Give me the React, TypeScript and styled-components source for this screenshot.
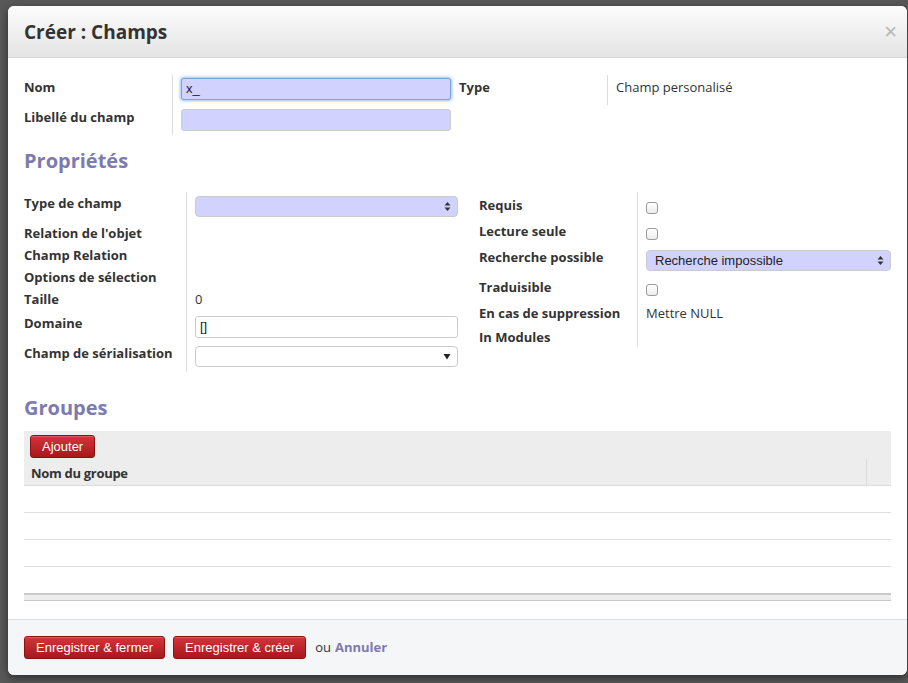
import React from 'react'
import styled, { createGlobalStyle } from 'styled-components'

const GlobalStyle = createGlobalStyle`
  html, body {
    margin: 0;
    padding: 0;
    background: #585858;
    overflow: hidden;
  }
`

const Page = styled.div`
  height: 683px;
  padding: 6px 0 0 8px;
  box-sizing: border-box;
  background: #585858;
  font-family: 'Open Sans', 'DejaVu Sans', sans-serif;
  color: #333;
`

const Modal = styled.div`
  width: 899px;
  height: 669px;
  background: #fff;
  border-radius: 6px;
  box-shadow: 0 3px 8px rgba(0, 0, 0, 0.5);
  display: flex;
  flex-direction: column;
  overflow: hidden;
`

const Header = styled.div`
  height: 52px;
  box-sizing: border-box;
  display: flex;
  align-items: center;
  justify-content: space-between;
  padding: 0 10px 0 16px;
  background: linear-gradient(#fcfcfc, #e4e4e4);
  border-bottom: 1px solid #d6d6d6;
`

const Title = styled.h3`
  margin: 0;
  font-size: 19px;
  font-weight: 700;
  letter-spacing: 0;
  color: #333;
`

const Close = styled.span`
  font-family: 'Liberation Sans', sans-serif;
  font-size: 22px;
  color: #b5b5b5;
  line-height: 1;
`

const Body = styled.div`
  flex: 1;
  padding: 17px 16px 0;
`

const Section = styled.div<{ $gap?: number }>`
  display: flex;
  gap: ${(p) => p.$gap ?? 0}px;
`

const Group = styled.div<{ $w: number }>`
  width: ${(p) => p.$w}px;
  flex-shrink: 0;
`

const Row = styled.div<{ $h: number; $lw: number }>`
  display: grid;
  grid-template-columns: ${(p) => p.$lw}px 1fr;
  height: ${(p) => p.$h}px;
`

const Label = styled.div<{ $pt: number }>`
  padding-top: ${(p) => p.$pt}px;
  font-size: 13px;
  line-height: 16px;
  font-weight: 700;
  color: #333;
  white-space: nowrap;
`

const Field = styled.div<{ $pt: number }>`
  border-left: 1px solid #dcdcdc;
  padding: ${(p) => p.$pt}px 0 0 8px;
  font-size: 13px;
  line-height: 16px;
  color: #333;
`

const Input = styled.div<{ $bg?: string; $focus?: boolean; $w?: number }>`
  width: ${(p) => (p.$w ? `${p.$w}px` : '100%')};
  height: 22px;
  box-sizing: border-box;
  border-radius: 3px;
  border: 1px solid ${(p) => (p.$focus ? '#79a6dc' : '#cbcbcb')};
  box-shadow: ${(p) => (p.$focus ? '0 0 3px 1px rgba(82, 148, 225, 0.6)' : 'none')};
  background: ${(p) => p.$bg ?? '#fff'};
  font-family: 'Liberation Sans', sans-serif;
  font-size: 13px;
  line-height: 20px;
  padding: 0 4px;
  color: #222;
`

const Select = styled.div<{ $bg?: string }>`
  height: 21px;
  box-sizing: border-box;
  border-radius: 4px;
  border: 1px solid #cbcbcb;
  background: ${(p) => p.$bg ?? '#fff'};
  display: flex;
  align-items: center;
  justify-content: space-between;
  padding: 0 6px 0 8px;
  font-family: 'Liberation Sans', sans-serif;
  font-size: 13px;
  color: #222;
`

const Check = styled.span`
  display: block;
  width: 12px;
  height: 12px;
  box-sizing: border-box;
  border: 1px solid #9a9a9a;
  border-radius: 3px;
  background: linear-gradient(#fff, #ececec);
`

const Heading = styled.h2<{ $mt: number; $mb: number }>`
  margin: ${(p) => p.$mt}px 0 ${(p) => p.$mb}px;
  font-size: 20px;
  line-height: 24px;
  font-weight: 700;
  color: #7c7bad;
`

const Table = styled.div`
  width: 867px;
`

const TableHead = styled.div`
  background: #ededed;
  border-bottom: 1px solid #dcdcdc;
  padding-top: 3px;
`

const Button = styled.button`
  height: 23px;
  padding: 0 11px;
  border: 1px solid #8b1010;
  border-radius: 3px;
  background: linear-gradient(#d3353a, #a8181c);
  color: #fff;
  font-family: 'Liberation Sans', sans-serif;
  font-size: 13px;
  box-shadow: inset 0 1px 0 rgba(255, 255, 255, 0.2);
  cursor: pointer;
`

const Toolbar = styled.div`
  padding: 0 6px;
  height: 25px;
`

const HeadRow = styled.div`
  display: grid;
  grid-template-columns: 1fr 25px;
  height: 26px;
`

const HeadCell = styled.div<{ $sep?: boolean }>`
  border-left: ${(p) => (p.$sep ? '1px solid #dcdcdc' : 'none')};
  padding: 5px 7px 0;
  font-size: 13px;
  font-weight: 700;
  letter-spacing: -0.3px;
  color: #333;
`

const BodyRow = styled.div<{ $last?: boolean }>`
  height: 26px;
  border-bottom: ${(p) => (p.$last ? 'none' : '1px solid #dedede')};
`

const TableFoot = styled.div`
  height: 5px;
  background: #ededed;
  border-top: 2px solid #c9c9c9;
  border-bottom: 1px solid #c9c9c9;
`

const Footer = styled.div`
  height: 56px;
  box-sizing: border-box;
  border-top: 1px solid #dcdcdc;
  background: #f5f6f8;
  display: flex;
  align-items: center;
  gap: 8px;
  padding: 0 16px 1px;
  font-size: 13px;
`

const Or = styled.span`
  margin-left: 1px;
  color: #333;
`

const Cancel = styled.a`
  font-weight: 700;
  color: #7c7bad;
  margin-left: -4px;
`

const UpDown = () => (
  <svg width="7" height="11" viewBox="0 0 7 11">
    <path d="M3.5 1 L6.5 4.5 L0.5 4.5 Z" fill="#333" />
    <path d="M3.5 10 L6.5 6.5 L0.5 6.5 Z" fill="#333" />
  </svg>
)

const Down = () => (
  <svg width="8" height="7" viewBox="0 0 8 7">
    <path d="M0.5 1 L7.5 1 L4 6.5 Z" fill="#222" />
  </svg>
)

const leftProps: { label: string; h: number; lp: number; fp: number; field?: React.ReactNode }[] = [
  { label: 'Type de champ', h: 30, lp: 3, fp: 4, field: <Select $bg="#d2d2ff"><span /><UpDown /></Select> },
  { label: "Relation de l'objet", h: 22, lp: 3, fp: 0 },
  { label: 'Champ Relation', h: 22, lp: 3, fp: 0 },
  { label: 'Options de sélection', h: 22, lp: 3, fp: 0 },
  { label: 'Taille', h: 22, lp: 3, fp: 3, field: '0' },
  { label: 'Domaine', h: 30, lp: 5, fp: 6, field: <Input>[]</Input> },
  { label: 'Champ de sérialisation', h: 32, lp: 5, fp: 6, field: <Select><span /><Down /></Select> },
]

const rightProps: { label: string; h: number; fp: number; field?: React.ReactNode }[] = [
  { label: 'Requis', h: 26, fp: 10, field: <Check /> },
  { label: 'Lecture seule', h: 26, fp: 10, field: <Check /> },
  { label: 'Recherche possible', h: 30, fp: 6, field: <Select $bg="#d2d2ff"><span>Recherche impossible</span><UpDown /></Select> },
  { label: 'Traduisible', h: 26, fp: 10, field: <Check /> },
  { label: 'En cas de suppression', h: 24, fp: 5, field: 'Mettre NULL' },
  { label: 'In Modules', h: 23, fp: 0 },
]

const App = (): React.ReactElement => {
  return (
    <>
      <GlobalStyle />
      <Page>
        <Modal>
          <Header>
            <Title>Créer : Champs</Title>
            <Close>×</Close>
          </Header>
          <Body>
            <Section>
              <Group $w={435}>
                <Row $h={30} $lw={148}>
                  <Label $pt={4}>Nom</Label>
                  <Field $pt={3}>
                    <Input $bg="#d2d2ff" $focus $w={270}>x_</Input>
                  </Field>
                </Row>
                <Row $h={30} $lw={148}>
                  <Label $pt={4}>Libellé du champ</Label>
                  <Field $pt={4}>
                    <Input $bg="#d2d2ff" $w={270} />
                  </Field>
                </Row>
              </Group>
              <Group $w={432}>
                <Row $h={30} $lw={148}>
                  <Label $pt={4}>Type</Label>
                  <Field $pt={4}>Champ personalisé</Field>
                </Row>
              </Group>
            </Section>

            <Heading $mt={14} $mb={19}>Propriétés</Heading>

            <Section $gap={21}>
              <Group $w={434}>
                {leftProps.map((r) => (
                  <Row key={r.label} $h={r.h} $lw={162}>
                    <Label $pt={r.lp}>{r.label}</Label>
                    <Field $pt={r.fp}>{r.field}</Field>
                  </Row>
                ))}
              </Group>
              <Group $w={412}>
                {rightProps.map((r) => (
                  <Row key={r.label} $h={r.h} $lw={158}>
                    <Label $pt={5}>{r.label}</Label>
                    <Field $pt={r.fp}>{r.field}</Field>
                  </Row>
                ))}
              </Group>
            </Section>

            <Heading $mt={24} $mb={11}>Groupes</Heading>

            <Table>
              <TableHead>
                <Toolbar>
                  <Button>Ajouter</Button>
                </Toolbar>
                <HeadRow>
                  <HeadCell>Nom du groupe</HeadCell>
                  <HeadCell $sep />
                </HeadRow>
              </TableHead>
              <BodyRow />
              <BodyRow />
              <BodyRow />
              <BodyRow $last />
              <TableFoot />
            </Table>
          </Body>
          <Footer>
            <Button>Enregistrer &amp; fermer</Button>
            <Button>Enregistrer &amp; créer</Button>
            <Or>ou</Or>
            <Cancel>Annuler</Cancel>
          </Footer>
        </Modal>
      </Page>
    </>
  )
}

export default App
